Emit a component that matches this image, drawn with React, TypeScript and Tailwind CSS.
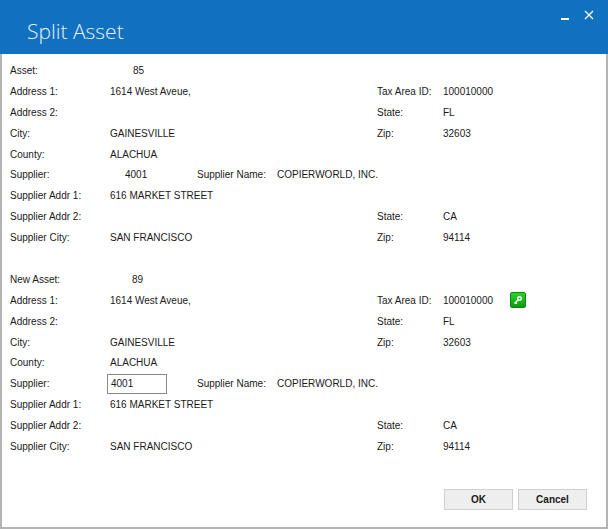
import React from "react";

const font = "[font-family:'Liberation_Sans',Arial,sans-serif]";

const Row: React.FC<{ children: React.ReactNode }> = ({ children }) => (
  <div className="grid h-[20.9px] grid-cols-[100px_87px_80px_100px_66px_67px_16px] items-center">{children}</div>
);

const KeyButton = () => (
  <div className="col-start-7 flex h-[16px] w-[16px] items-center justify-center rounded-[2px] border border-[#0b8a0b] bg-gradient-to-b from-[#2fd12f] to-[#0a9a0a]">
    <svg width="10" height="10" viewBox="0 0 10 10" fill="none" stroke="white" strokeWidth="1.4">
      <circle cx="6.5" cy="3.5" r="1.8" />
      <path d="M5.2 4.8 1.5 8.5M2.5 7.5 3.8 8.8" />
    </svg>
  </div>
);

interface BlockProps {
  label: string;
  asset: string;
  assetPad: string;
  editable?: boolean;
}

const AssetBlock: React.FC<BlockProps> = ({ label, asset, assetPad, editable }) => (
  <div>
    <Row>
      <span>{label}</span>
      <span className={assetPad}>{asset}</span>
    </Row>
    <Row>
      <span>Address 1:</span>
      <span className="col-span-3 whitespace-nowrap">1614 West Aveue,</span>
      <span>Tax Area ID:</span>
      <span>100010000</span>
      {editable && <KeyButton />}
    </Row>
    <Row>
      <span>Address 2:</span>
      <span className="col-span-3" />
      <span>State:</span>
      <span>FL</span>
    </Row>
    <Row>
      <span>City:</span>
      <span className="col-span-3">GAINESVILLE</span>
      <span>Zip:</span>
      <span>32603</span>
    </Row>
    <Row>
      <span>County:</span>
      <span>ALACHUA</span>
    </Row>
    <Row>
      <span>Supplier:</span>
      {editable ? (
        <div className="-ml-[3px] flex h-[20px] w-[60px] items-center border border-[#8a8a8a] bg-white pl-[3px]">4001</div>
      ) : (
        <span className="pl-[15px]">4001</span>
      )}
      <span>Supplier Name:</span>
      <span className="col-span-3 whitespace-nowrap">COPIERWORLD, INC.</span>
    </Row>
    <Row>
      <span>Supplier Addr 1:</span>
      <span className="col-span-3 whitespace-nowrap">616 MARKET STREET</span>
    </Row>
    <Row>
      <span>Supplier Addr 2:</span>
      <span className="col-span-3" />
      <span>State:</span>
      <span>CA</span>
    </Row>
    <Row>
      <span>Supplier City:</span>
      <span className="col-span-3">SAN FRANCISCO</span>
      <span>Zip:</span>
      <span>94114</span>
    </Row>
  </div>
);

export default function App() {
  return (
    <div className={`${font} flex h-[529px] w-[608px] flex-col border-x-2 border-b-2 border-x-[#b4b4b4] border-b-[#b4b4b4] bg-white text-[10px] text-[#1a1a1a]`}>
      <header className="-mx-[2px] flex h-[54px] shrink-0 items-start justify-between bg-[#1170c0] pl-[27px] pr-[14px]">
        <h1 className="mt-[15px] font-['Open_Sans',sans-serif] text-[21px] leading-[32px] font-light text-[#e6f1fa]">Split Asset</h1>
        <div className="mt-[10px] flex items-start gap-[15px]">
          <svg width="8" height="10" viewBox="0 0 8 10">
            <rect x="0" y="8" width="8" height="2" fill="white" />
          </svg>
          <svg width="10" height="10" viewBox="0 0 10 10" stroke="white" strokeWidth="1.2">
            <path d="M1 1 9 9M9 1 1 9" />
          </svg>
        </div>
      </header>
      <main className="flex flex-1 flex-col pl-[8px] pt-[6px]">
        <AssetBlock label="Asset:" asset="85" assetPad="pl-[23px]" />
        <div className="h-[20.9px]" />
        <AssetBlock label="New Asset:" asset="89" assetPad="pl-[22px]" editable />
        <div className="mt-auto flex justify-end gap-[5px] pb-[17px] pr-[19px]">
          <button className="h-[21px] w-[69px] border border-[#d0d0d0] bg-[#eeeeee] font-bold">OK</button>
          <button className="h-[21px] w-[69px] border border-[#d0d0d0] bg-[#eeeeee] font-bold">Cancel</button>
        </div>
      </main>
    </div>
  );
}
